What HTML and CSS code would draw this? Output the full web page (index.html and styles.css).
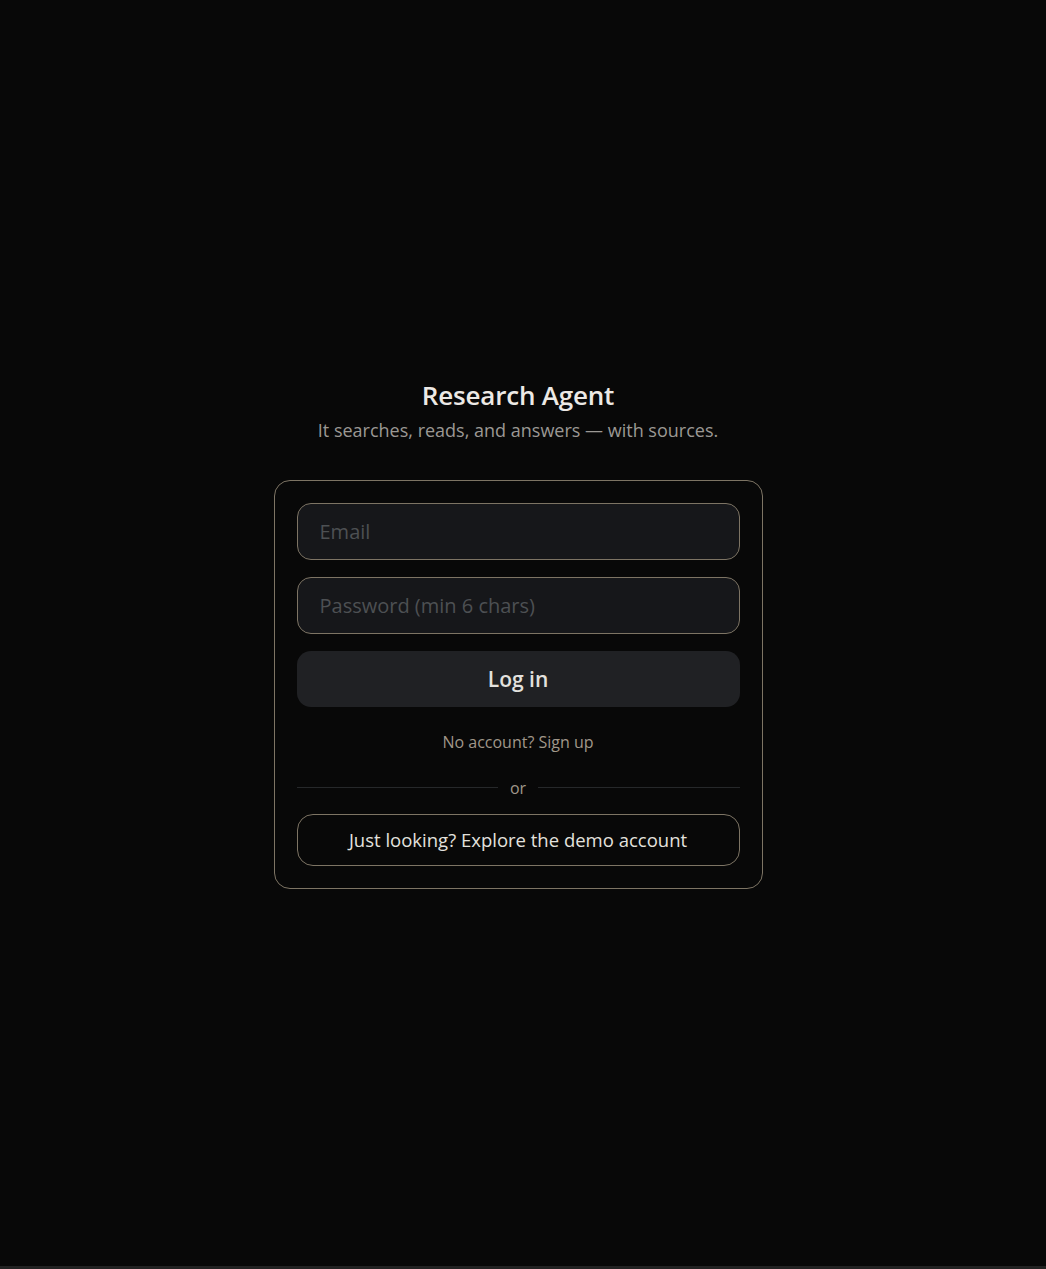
FILE: index.html
```html
<!DOCTYPE html>
<html>
<head>
    <meta charset="UTF-8">
    <meta name="viewport" content="width=device-width, initial-scale=1.0">
    <title>Research Agent</title>
    <link rel="stylesheet" href="styles.css">
</head>
<body>
    <div class="page">
        <div class="auth">
            <h1>Research Agent</h1>
            <p class="tagline">It searches, reads, and answers — with sources.</p>

            <form class="card" onsubmit="return false;">
                <input type="email" class="field" placeholder="Email">
                <input type="password" class="field" placeholder="Password (min 6 chars)">
                <button type="submit" class="btn-primary">Log in</button>

                <a href="#" class="switch">No account? Sign up</a>

                <div class="divider"><span>or</span></div>

                <button type="button" class="btn-demo">Just looking? Explore the demo account</button>
            </form>
        </div>
    </div>
</body>
</html>
```

FILE: styles.css
```css
* {
    margin: 0;
    padding: 0;
    box-sizing: border-box;
}

html {
    background: #222;
}

body {
    font-family: "Open Sans", "Noto Sans", Arial, sans-serif;
    background: #080808;
    color: #e6e4e1;
}

.page {
    min-height: calc(100vh - 3px);
    display: flex;
    align-items: center;
    justify-content: center;
    padding-right: 10px;
    background: #080808;
}

.auth {
    width: 489px;
    text-align: center;
}

h1 {
    font-size: 26px;
    font-weight: 600;
    color: #ece9e5;
    line-height: 34px;
    letter-spacing: -0.2px;
}

.tagline {
    margin-top: 5px;
    font-size: 18px;
    color: #9b9894;
    line-height: 26px;
}

.card {
    margin-top: 37px;
    border: 1px solid #7d7464;
    border-radius: 16px;
    padding: 22px;
    display: flex;
    flex-direction: column;
}

.field {
    height: 57px;
    background: #16171a;
    border: 1px solid #7d7464;
    border-radius: 14px;
    padding: 0 22px;
    font-family: inherit;
    font-size: 20px;
    color: #e6e4e1;
    outline: none;
    margin-bottom: 17px;
}

.field::placeholder {
    color: #4d5053;
}

.btn-primary {
    height: 56px;
    background: #202124;
    border: none;
    border-radius: 14px;
    font-family: inherit;
    font-size: 21px;
    font-weight: 600;
    color: #e3e1de;
    cursor: pointer;
}

.switch {
    margin-top: 24px;
    font-size: 16px;
    line-height: 22px;
    color: #a0978a;
    text-decoration: none;
}

.divider {
    display: flex;
    align-items: center;
    gap: 12px;
    margin-top: 24px;
    font-size: 16px;
    color: #a0978a;
    line-height: 22px;
}

.divider::before,
.divider::after {
    content: "";
    flex: 1;
    height: 1px;
    background: #26282a;
}

.btn-demo {
    margin-top: 15px;
    height: 52px;
    background: transparent;
    border: 1px solid #7d7464;
    border-radius: 16px;
    font-family: inherit;
    font-size: 18.5px;
    color: #e3e1de;
    cursor: pointer;
}
```
